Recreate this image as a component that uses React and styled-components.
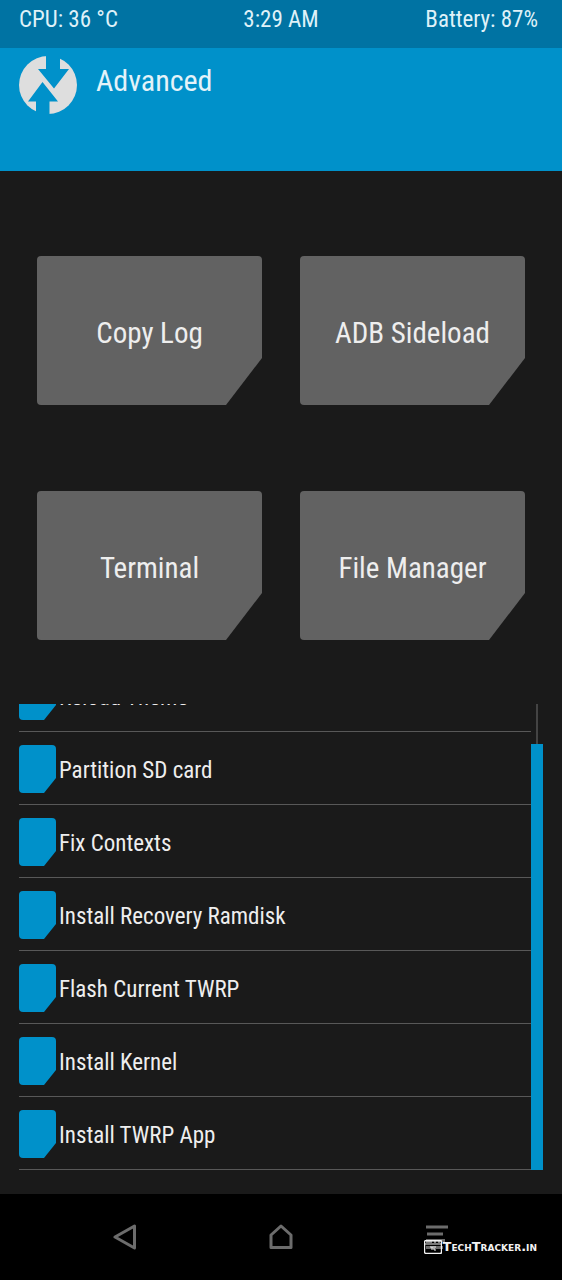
import React from "react";
import styled, { createGlobalStyle } from "styled-components";

const GlobalStyle = createGlobalStyle`
  *, *::before, *::after { box-sizing: border-box; }
  body {
    margin: 0;
    background: #1a1a1a;
    color: #eeeeee;
    font-family: "Roboto Condensed", "Liberation Sans Narrow", Roboto, sans-serif;
  }
  button { font: inherit; color: inherit; border: 0; cursor: pointer; }
`;

const Screen = styled.div`
  display: flex;
  flex-direction: column;
  min-height: 100vh;
`;

const StatusBar = styled.div`
  display: grid;
  grid-template-columns: 1fr auto 1fr;
  height: 48px;
  padding: 4px 24px 0 19px;
  background: #0073a3;
  color: #dff1f8;
  font-size: 23px;
  line-height: 32px;
`;

const StatusItem = styled.span`
  padding-left: ${({ $align }) => ($align === "center" ? "5px" : "0")};
  text-align: ${({ $align }) => $align || "left"};
`;

const Header = styled.header`
  display: flex;
  align-items: flex-start;
  gap: 19px;
  height: 123px;
  padding: 8px 19px;
  background: #0091ca;
`;

const Title = styled.h1`
  margin: 8px 0 0;
  color: #e4f3f9;
  font-size: 30px;
  font-weight: 400;
  line-height: 34px;
`;

const Actions = styled.main`
  display: grid;
  grid-template-columns: 1fr 1fr;
  gap: 86px 38px;
  padding: 85px 37px 64px;
`;

const ActionButton = styled.button`
  height: 149px;
  padding: 4px 0 0;
  border-radius: 4px;
  background: #626262;
  font-size: 29px;
  clip-path: polygon(0 0, 100% 0, 100% calc(100% - 47px), calc(100% - 36px) 100%, 0 100%);
`;

const ListArea = styled.section`
  display: flex;
  height: 466px;
  margin: 0 19px 24px;
`;

const List = styled.ul`
  display: flex;
  flex: 1;
  flex-direction: column;
  justify-content: flex-end;
  margin: 0;
  padding: 0;
  overflow: hidden;
  list-style: none;
`;

const Item = styled.li`
  flex: none;
  border-bottom: 1px solid #585858;
`;

const ItemButton = styled.button`
  display: flex;
  align-items: center;
  gap: 3px;
  width: 100%;
  height: 72px;
  padding: 2px 0 0;
  background: none;
  font-size: 23px;
  line-height: 30px;
  text-align: left;
`;

const ItemLabel = styled.span`
  padding-top: 4px;
`;

const Tile = styled.span`
  width: 37px;
  height: 48px;
  border-radius: 4px;
  background: #0091ca;
  clip-path: polygon(0 0, 100% 0, 100% calc(100% - 15px), calc(100% - 12px) 100%, 0 100%);
`;

const Track = styled.div`
  width: 12px;
  padding-top: 40px;
  background: linear-gradient(#444444, #444444) center / 2px 100% no-repeat;
`;

const Thumb = styled.div`
  height: 100%;
  background: #0091ca;
`;

const NavBar = styled.nav`
  position: relative;
  display: grid;
  grid-template-columns: repeat(3, 1fr);
  height: 86px;
  margin-top: auto;
  padding: 0 47px;
  background: #000000;
`;

const NavButton = styled.button`
  display: flex;
  align-items: center;
  justify-content: center;
  padding: 0;
  background: none;
`;

const Watermark = styled.div`
  position: absolute;
  right: 25px;
  bottom: 25px;
  display: flex;
  align-items: center;
  gap: 1px;
  color: #f2f2f2;
  font-family: "DejaVu Sans", sans-serif;
  font-size: 13px;
  font-weight: 700;
  font-variant: small-caps;
  line-height: 16px;
`;

const actions = ["Copy Log", "ADB Sideload", "Terminal", "File Manager"];
const items = [
  "Reload Theme",
  "Partition SD card",
  "Fix Contexts",
  "Install Recovery Ramdisk",
  "Flash Current TWRP",
  "Install Kernel",
  "Install TWRP App",
];

function Logo() {
  return (
    <svg width="58" height="58" viewBox="0 0 58 58" aria-hidden="true">
      <circle cx="29" cy="29" r="29" fill="#dedede" />
      <path fill="#0091ca" d="M27 -1H41V13H50L35 32.500L19 13H27Z" />
      <path fill="#0091ca" d="M30.500 59H17V45.500H9L23.500 26L39 45.500H30.500Z" />
    </svg>
  );
}

function BackIcon() {
  return (
    <svg width="24" height="26" viewBox="0 0 24 26" fill="none" stroke="#6c6c6c" strokeWidth="3" strokeLinejoin="round" aria-hidden="true">
      <path d="M21.500 2V24L2 13Z" />
    </svg>
  );
}

function HomeIcon() {
  return (
    <svg width="24" height="26" viewBox="0 0 24 26" fill="none" stroke="#6c6c6c" strokeWidth="3" strokeLinejoin="round" aria-hidden="true">
      <path d="M2 11L12 2L22 11V23.500H2Z" />
    </svg>
  );
}

function MenuIcon() {
  return (
    <svg width="24" height="24" viewBox="0 0 24 24" stroke="#6c6c6c" strokeWidth="3" aria-hidden="true">
      <path d="M1 2H23M2 9H18M1 15.500H20M1 22.500H18" />
    </svg>
  );
}

function WatermarkIcon() {
  return (
    <svg width="18" height="14" viewBox="0 0 18 14" fill="none" stroke="#f2f2f2" aria-hidden="true">
      <rect x="0.500" y="0.500" width="17" height="13" rx="1.500" strokeWidth="1.400" />
      <path d="M1 4H17" />
      <path d="M2 2H8M10 2H12M14 2H16" />
      <path d="M6 7H12M8 7V10M10 8V10H12" />
    </svg>
  );
}

export default function App() {
  return (
    <Screen>
      <GlobalStyle />
      <StatusBar>
        <StatusItem>CPU: 36 °C</StatusItem>
        <StatusItem $align="center">3:29 AM</StatusItem>
        <StatusItem $align="right">Battery: 87%</StatusItem>
      </StatusBar>
      <Header>
        <Logo />
        <Title>Advanced</Title>
      </Header>
      <Actions>
        {actions.map((label) => (
          <ActionButton key={label} type="button">{label}</ActionButton>
        ))}
      </Actions>
      <ListArea>
        <List>
          {items.map((label) => (
            <Item key={label}>
              <ItemButton type="button">
                <Tile />
                <ItemLabel>{label}</ItemLabel>
              </ItemButton>
            </Item>
          ))}
        </List>
        <Track>
          <Thumb />
        </Track>
      </ListArea>
      <NavBar>
        <NavButton type="button" aria-label="Back"><BackIcon /></NavButton>
        <NavButton type="button" aria-label="Home"><HomeIcon /></NavButton>
        <NavButton type="button" aria-label="Menu"><MenuIcon /></NavButton>
        <Watermark>
          <WatermarkIcon />
          TechTracker.in
        </Watermark>
      </NavBar>
    </Screen>
  );
}
